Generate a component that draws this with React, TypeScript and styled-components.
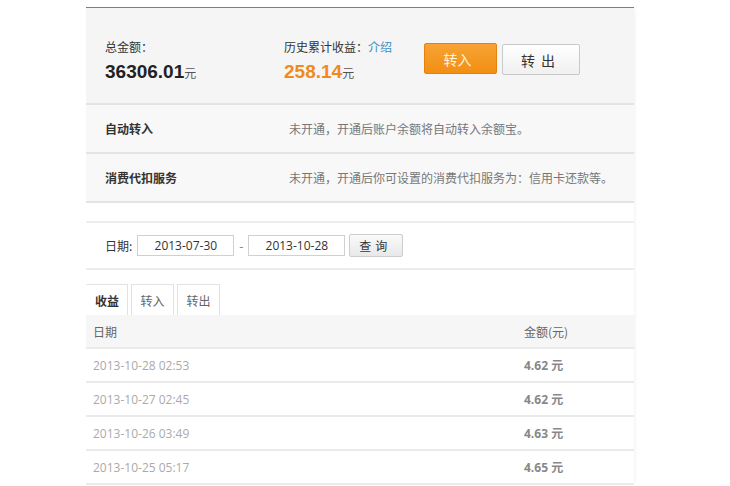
import React from "react";
import styled, { createGlobalStyle } from "styled-components";

const Global = createGlobalStyle`
  html, body { margin: 0; padding: 0; background: #fff; }
  body { font-family: "Noto Sans CJK SC", "Liberation Sans", sans-serif; font-size: 12px; color: #333; }
`;

const Panel = styled.div`
  margin: 7px 0 0 86px;
  width: 548px;
  box-shadow: 3px 0 3px -2px rgba(0,0,0,0.06);
`;

const Summary = styled.div`
  border-top: 1px solid #7d7d7d;
  border-bottom: 2px solid #e4e4e4;
  background: #f5f5f5;
  height: 98px;
  box-sizing: border-box;
  padding: 31px 0 0 19px;
  display: flex;
  align-items: flex-start;
`;

const Stat = styled.div<{ $w: number }>`
  width: ${(p) => p.$w}px;
  display: flex;
  flex-direction: column;
  gap: 5px;
`;

const Label = styled.div`
  font-size: 12px;
  line-height: 16px;
  color: #333;
`;

const Link = styled.a`
  color: #3d8fc0;
  text-decoration: none;
`;

const Amount = styled.div<{ $orange?: boolean }>`
  font-family: "Liberation Sans", Arial, sans-serif;
  font-weight: bold;
  font-size: 19px;
  line-height: 24px;
  color: ${(p) => (p.$orange ? "#f08a1d" : "#222")};
`;

const Unit = styled.span`
  font-family: "Noto Sans CJK SC", sans-serif;
  font-weight: normal;
  font-size: 12px;
  color: #555;
`;

const Buttons = styled.div`
  display: flex;
  gap: 5px;
  margin-top: 4px;
`;

const Btn = styled.button<{ $primary?: boolean }>`
  font-family: "Noto Sans CJK SC", sans-serif;
  font-size: 14px;
  box-sizing: border-box;
  height: 31px;
  width: ${(p) => (p.$primary ? 73 : 78)}px;
  margin-top: ${(p) => (p.$primary ? 0 : 1)}px;
  border-radius: 2px;
  cursor: pointer;
  letter-spacing: ${(p) => (p.$primary ? 0 : 6)}px;
  padding-left: ${(p) => (p.$primary ? 0 : 6)}px;
  border: 1px solid ${(p) => (p.$primary ? "#e5820f" : "#c9c9c9")};
  color: ${(p) => (p.$primary ? "#fff6e0" : "#333")};
  background: ${(p) =>
    p.$primary
      ? "linear-gradient(#f7a334, #f28f13)"
      : "linear-gradient(#ffffff, #f0f0f0)"};
`;

const ServiceRow = styled.div`
  display: flex;
  align-items: center;
  height: 47px;
  padding-left: 19px;
  background: #f8f8f8;
  border-bottom: 2px solid #e4e4e4;
`;

const ServiceName = styled.div`
  width: 184px;
  font-weight: bold;
  color: #333;
`;

const ServiceDesc = styled.div`
  color: #777;
`;

const Spacer = styled.div`
  height: 18px;
  border-bottom: 2px solid #ededed;
`;

const FilterRow = styled.div`
  display: flex;
  align-items: center;
  height: 45px;
  padding-left: 19px;
  border-bottom: 2px solid #ededed;
  color: #333;
`;

const FilterLabel = styled.span`
  margin-right: 5px;
`;

const DateInput = styled.div`
  box-sizing: border-box;
  width: 97px;
  height: 21px;
  border: 1px solid #d0d0d0;
  background: #fff;
  font-family: "Open Sans", "Liberation Sans", sans-serif;
  font-size: 12px;
  line-height: 19px;
  text-align: center;
  color: #333;
`;

const Dash = styled.span`
  width: 14px;
  text-align: center;
  color: #777;
`;

const QueryBtn = styled.button`
  margin-left: 4px;
  box-sizing: border-box;
  width: 54px;
  height: 23px;
  border: 1px solid #cdcdcd;
  border-radius: 2px;
  background: linear-gradient(#fafafa, #e8e8e8);
  font-family: "Noto Sans CJK SC", sans-serif;
  font-size: 12px;
  letter-spacing: 4px;
  padding-left: 4px;
  color: #333;
`;

const Tabs = styled.div`
  display: flex;
  align-items: flex-end;
  height: 45px;
  gap: 3px;
`;

const Tab = styled.div<{ $active?: boolean }>`
  box-sizing: border-box;
  height: 31px;
  width: ${(p) => (p.$active ? 42 : 43)}px;
  display: flex;
  align-items: center;
  justify-content: center;
  border: 1px solid #e2e2e2;
  border-bottom: none;
  border-left-color: ${(p) => (p.$active ? "transparent" : "#e2e2e2")};
  background: #fff;
  font-weight: ${(p) => (p.$active ? "bold" : "normal")};
  color: ${(p) => (p.$active ? "#333" : "#666")};
`;

const Table = styled.div`
  display: flex;
  flex-direction: column;
`;

const TRow = styled.div<{ $head?: boolean }>`
  display: grid;
  grid-template-columns: 431px 1fr;
  align-items: center;
  height: 32px;
  padding-left: 7px;
  background: ${(p) => (p.$head ? "#f6f6f6" : "#fff")};
  border-bottom: 2px solid #ebebeb;
`;

const Cell = styled.div<{ $kind: "head" | "date" | "amt" }>`
  font-family: ${(p) =>
    p.$kind === "head" ? '"Noto Sans CJK SC", sans-serif' : '"Open Sans", "Noto Sans CJK SC", sans-serif'};
  font-size: 12px;
  font-weight: ${(p) => (p.$kind === "amt" ? "bold" : "normal")};
  color: ${(p) => (p.$kind === "head" ? "#666" : p.$kind === "date" ? "#aaa" : "#888")};
`;

const rows = [
  ["2013-10-28 02:53", "4.62"],
  ["2013-10-27 02:45", "4.62"],
  ["2013-10-26 03:49", "4.63"],
  ["2013-10-25 05:17", "4.65"],
];

export default function App() {
  return (
    <>
      <Global />
      <Panel>
        <Summary>
          <Stat $w={179}>
            <Label>总金额：</Label>
            <Amount>
              36306.01<Unit>元</Unit>
            </Amount>
          </Stat>
          <Stat $w={140}>
            <Label>
              历史累计收益：<Link href="#">介绍</Link>
            </Label>
            <Amount $orange>
              258.14<Unit>元</Unit>
            </Amount>
          </Stat>
          <Buttons>
            <Btn $primary>转入</Btn>
            <Btn>转出</Btn>
          </Buttons>
        </Summary>
        <ServiceRow>
          <ServiceName>自动转入</ServiceName>
          <ServiceDesc>未开通，开通后账户余额将自动转入余额宝。</ServiceDesc>
        </ServiceRow>
        <ServiceRow>
          <ServiceName>消费代扣服务</ServiceName>
          <ServiceDesc>未开通，开通后你可设置的消费代扣服务为：信用卡还款等。</ServiceDesc>
        </ServiceRow>
        <Spacer />
        <FilterRow>
          <FilterLabel>日期:</FilterLabel>
          <DateInput>2013-07-30</DateInput>
          <Dash>-</Dash>
          <DateInput>2013-10-28</DateInput>
          <QueryBtn>查询</QueryBtn>
        </FilterRow>
        <Tabs>
          <Tab $active>收益</Tab>
          <Tab>转入</Tab>
          <Tab>转出</Tab>
        </Tabs>
        <Table>
          <TRow $head>
            <Cell $kind="head">日期</Cell>
            <Cell $kind="head">金额(元)</Cell>
          </TRow>
          {rows.map(([d, a]) => (
            <TRow key={d}>
              <Cell $kind="date">{d}</Cell>
              <Cell $kind="amt">{a} 元</Cell>
            </TRow>
          ))}
        </Table>
      </Panel>
    </>
  );
}
